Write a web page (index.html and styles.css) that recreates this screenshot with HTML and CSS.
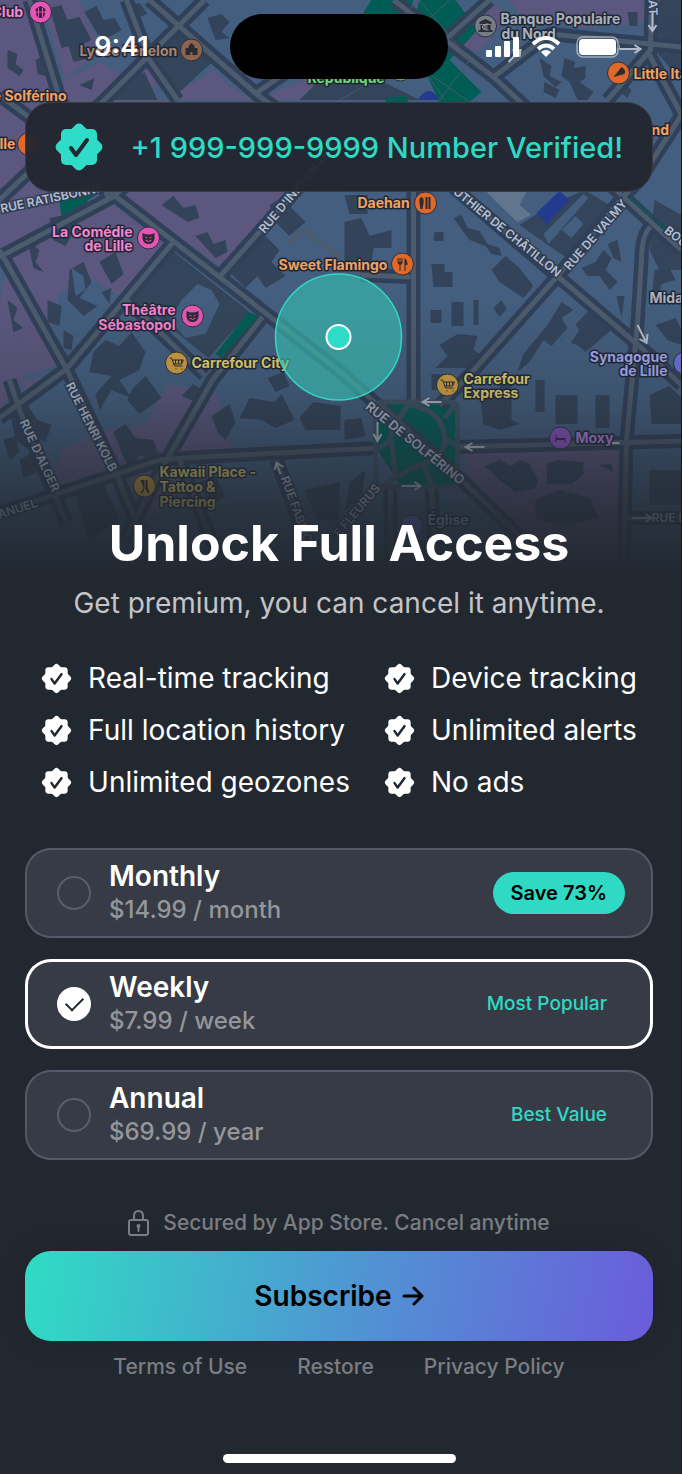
FILE: index.html
```html
<!DOCTYPE html>
<html lang="en">
<head>
    <meta charset="UTF-8">
    <meta name="viewport" content="width=device-width, initial-scale=1.0">
    <title>Unlock Full Access</title>
    <link rel="stylesheet" href="styles.css">
</head>
<body>
    <svg class="defs" width="0" height="0" aria-hidden="true">
        <symbol id="seal" viewBox="-25 -25 50 50">
            <rect x="-18" y="-18" width="36" height="36" rx="5"/>
            <rect x="-18" y="-18" width="36" height="36" rx="5" transform="rotate(45)"/>
            <path class="tick" d="M-8 1 L-3 8 L8 -7"/>
        </symbol>
    </svg>

    <main class="screen">
        <svg class="map" viewBox="0 0 682 600" preserveAspectRatio="xMidYMin slice" aria-hidden="true">
            <defs>
                <linearGradient id="fade" x1="0" y1="0" x2="0" y2="1">
                    <stop offset="0" stop-color="#222830" stop-opacity="0"/>
                    <stop offset="0.3" stop-color="#222830" stop-opacity="0.18"/>
                    <stop offset="0.5" stop-color="#222830" stop-opacity="0.48"/>
                    <stop offset="0.7" stop-color="#222830" stop-opacity="0.78"/>
                    <stop offset="0.92" stop-color="#222830"/>
                    <stop offset="1" stop-color="#222830"/>
                </linearGradient>
                <g id="streets">
                    <path d="M30 0L60 98L110 200M205 0L107 98L0 200M127 0L150 60L178 100M150 0L258 95L320 140M257 93L300 63L341 50M490 0L440 45M0 95L60 140L117 197L220 277L341 372L377 404L460 478L545 560"/>
                    <path d="M394 0L494 77L554 133L682 250M380 110L457 190L559 277L641 347L682 385M621 200L559 275L468 377L440 405M494 77L550 34L682 47M652 0L651 50L608 100M650 55L682 115L640 180L621 200"/>
                    <path d="M0 257L113 197L178 140M173 243L67 369L0 418M0 250L67 369L115 470L140 530M341 140L220 277M127 300L205 375M263 317L213 380L167 460L125 540M414 190V400M361 275L411 277M651 227Q642 235 642 260L638 323L627 440L624 570"/>
                    <path d="M0 513L160 460L200 457L378 448M458 447L682 441M10 380L20 410L67 523M277 460L310 550M180 460L220 560M391 487V580M432 487L436 560M624 518H682"/>
                </g>
            </defs>

            <rect width="682" height="600" fill="#435e7e"/>

            <!-- districts -->
            <g fill="#5b577e">
                <path d="M0 0H30L58 95L0 155ZM40 0H80L98 42L90 60L66 80ZM0 130L55 100L110 190L0 250ZM62 82L100 62L125 78L160 55L165 82L130 100L170 100L185 190H115L62 140ZM178 92L215 70L232 88L255 100H178ZM262 98L330 68L350 100H262ZM120 192H290L235 255L218 265ZM10 255L113 204L165 243L125 300L95 280L60 292L52 330L66 362L30 375L0 300Z"/>
                <path d="M0 300L30 370L0 410ZM20 380L60 375L30 400ZM168 385L215 388L232 448L170 455L50 490L62 450L105 430L145 425ZM467 452L622 448V580H540L465 470ZM510 0H682V15L640 22L580 28L520 14ZM448 30L490 0L510 15L480 52L455 45ZM128 470L170 462L190 480L150 520Z"/>
            </g>
            <g fill="#34455b">
                <path d="M172 250L250 312L209 358L132 296ZM180 18L215 60L180 92L155 55ZM115 88L145 72L158 100H112ZM340 60L420 100H300ZM660 0H682V80L655 50ZM60 200L85 196L90 206L75 215ZM345 180H440V190H345Z"/>
                <path d="M552 205L585 190L610 205L570 260L520 225ZM655 200L682 215V270L660 270L650 250ZM420 540H560V600H400ZM650 470H682V505H650Z"/>
            </g>
            <g fill="#005d55">
                <path d="M372 0H414L390 60L330 66ZM420 0H456L478 30L450 60L482 92L470 102H440L425 70L400 80ZM386 98L405 96L410 104H386ZM60 200L90 190H104L62 218ZM378 403H452Q458 404 458 410V480Q458 486 450 487H402L378 450Z"/>
            </g>
            <path d="M485 190H528L520 205L532 215L518 222L500 205Z" fill="#62758f"/>

            <!-- buildings -->
            <g fill="#33435a">
                <path d="M50 8L62 5L68 20L80 17L92 40L84 44L90 58L74 62L69 46L62 48ZM85 12L97 6L104 20L115 18L122 30L108 38L98 34ZM130 6L140 3L148 14L138 18ZM208 18L222 14L230 22L222 32L230 38L216 40ZM8 50L18 54L16 64L24 70L20 76L8 68ZM36 60L44 56L52 66L46 76L38 74ZM200 50L212 46L218 56L208 62ZM120 92L140 82L150 98H118ZM80 85L95 78L92 90Z"/>
                <path d="M540 58L552 66L550 76L562 82L556 87L544 76ZM565 58L576 62L574 68L586 66V78L580 82L594 92L588 100H578L570 82L562 76ZM545 82L560 90L556 98L544 92ZM628 12H638V26H630ZM622 80L632 90L628 98L618 90ZM665 18H682V38H668ZM610 150L640 160L630 175L608 166Z"/>
                <path d="M162 205L174 196L184 208L196 205L200 218L188 222ZM196 236L208 232L214 244L226 240L228 252L216 258ZM228 270L246 250L266 236L280 250L272 262L286 276L266 288L258 276L246 288ZM270 205L282 198L306 222L290 236L276 222ZM50 218L70 214L74 232L66 246L54 240ZM28 240L40 250L36 262L44 272L34 268ZM70 270L84 262L92 282L80 298L98 306L84 316L68 300ZM48 300L62 306L60 326L48 322ZM8 300L18 308L14 320L24 328L14 332ZM100 262L116 252L124 274L112 284ZM102 292L112 288L110 304ZM64 330L74 336L72 350L64 348Z"/>
                <path d="M345 195H368V214H350ZM345 222L362 218L370 236L392 230V248H374L372 262H345ZM435 232H444V241H434ZM432 264H445V272H453V287H434ZM452 302H464V326H452ZM474 300H479V325H474ZM431 310H442V323H431ZM494 308L502 300L507 309L500 317ZM454 218L462 215L468 228L480 231L488 244L500 248L502 256L492 254L486 246L470 240L464 232ZM492 270L506 256L520 268L534 286L524 298L512 290L500 282ZM440 345L458 334L478 336L474 350L484 356L470 368H436L448 356ZM432 374H446L440 390H432Z"/>
                <path d="M582 268L596 262L604 250L612 258L606 270L618 282L610 290L600 276L588 276ZM608 244L618 240L622 262L614 258ZM548 325L562 302L574 310L562 318L568 328L552 346L544 340L530 362L518 372L524 354ZM617 296H625L622 318ZM654 250L662 256L656 262ZM655 270L670 268L676 280L662 284L658 300H652ZM656 325L676 318L682 330V345L668 340ZM561 340L590 310L612 330L586 352L578 345Z"/>
                <path d="M94 352L106 340L120 346L132 332L146 352L140 370L120 380L132 398L112 390L100 410L96 394L112 376L90 372ZM132 390L146 376L162 398L140 414L128 400ZM10 410L28 405L38 420L52 425L46 442L32 434L30 450L16 440ZM4 440L16 436L20 452L10 460ZM114 432L126 424L136 438L154 440L160 458L140 456L130 470L122 452ZM182 396L194 384L206 392L196 402ZM212 416L230 404L236 422L226 440L218 432ZM250 398L275 402L282 394L295 420L276 428L262 420L240 418ZM300 418L314 402L341 406V430H306ZM345 420L362 418L366 436L345 440ZM268 378L284 372L290 386L276 392ZM75 492L104 484L120 520L90 540ZM20 460L34 452L38 472L24 478ZM200 482L216 476L226 496L210 506ZM305 490L340 482V520H318Z"/>
                <path d="M480 395H500V382H512V420L520 424L500 430L484 424ZM536 380H545V412H536ZM556 395H578V424H556ZM596 395H610V428H596ZM650 395L670 386L682 398V424H652ZM485 466L500 460L512 466L520 460L530 464L538 480L536 488L516 492L500 480ZM547 464L558 460L584 462V474L572 484H548ZM600 465L612 464L614 472ZM350 482L366 470L362 500L346 510ZM536 500L560 490L590 498L600 518L560 526L536 518Z"/>
            </g>
            <g fill="#435e7e">
                <path d="M182 300L198 284L212 290L220 304L206 334L186 338L170 320ZM72 268L84 276L86 290L76 296ZM562 340L574 322L580 330L568 348ZM544 234L584 194L589 198L549 244ZM562 230L576 216L584 224L572 238Z"/>
            </g>

            <!-- streets: dark kerb first, then the roadway -->
            <use href="#streets" class="kerb"/>
            <use href="#streets" class="roadway"/>
            <path d="M290 243L305 230L341 257" class="roadway"/>
            <path d="M249 312L259 316L221 358L216 354Z" fill="#005d55"/>
            <path d="M418 100Q430 82 440 100ZM537 213L560 191L570 200L547 224Z" fill="#223b8f"/>
            <path d="M631 198L682 244" fill="none" stroke="#0b5a58" stroke-width="2" stroke-dasharray="30 6"/>
            <path class="park-path" d="M376 410Q376 402 384 402H450Q458 402 458 410V478Q458 487 450 487H384Q376 487 376 478ZM412 405Q445 412 445 440Q446 455 425 463Q395 475 384 487M376 448Q392 446 392 430L410 403M392 440L396 478M445 418L458 402M447 440L458 446M424 463L433 487M380 402L458 480"/>
            <path d="M345 66L420 0M385 60L450 0M370 20L400 45M355 40L400 70M420 0L470 60L440 100M340 100L410 60L470 102M425 70L445 100" fill="none" stroke="#465a66" stroke-width="1"/>

            <!-- street names -->
            <g class="road-names">
                <text x="2" y="213" transform="rotate(-12 2 213)">RUE RATISBONNE</text>
                <text x="265" y="234" transform="rotate(-50 265 234)">RUE D'INKERMANN</text>
                <text x="453" y="193" transform="rotate(39 453 193)">UTHIER DE CHÂTILLON</text>
                <text x="570" y="271" transform="rotate(-49 570 271)">RUE DE VALMY</text>
                <text x="664" y="232" transform="rotate(38 664 232)">BOULEVARD</text>
                <text class="wide" x="365" y="408" transform="rotate(39 365 408)">RUE DE SOLFÉRINO</text>
                <text x="66" y="385" transform="rotate(63 66 385)">RUE HENRI KOLB</text>
                <text x="20" y="422" transform="rotate(65 20 422)">RUE D'ALGER</text>
                <text x="0" y="519" transform="rotate(-18 0 519)">ANUEL</text>
                <text x="281" y="478" transform="rotate(70 281 478)">RUE FABRICY</text>
                <text x="340" y="538" transform="rotate(-50 340 538)">E FLEURUS</text>
                <text x="652" y="522">RUE N</text>
                <text x="649" y="0" transform="rotate(88 649 0)">AT</text>
            </g>
            <g fill="none" stroke="#b4bac6" stroke-width="2">
                <path d="M653 12V30M649 25L653 31L657 25M620 49H640M635 45L641 49L635 53M509 62L520 51M513 50L521 50L520 57M638 325L646 341M640 339L647 343L648 334M442 402H424M430 398L423 402L430 406M378 422V439M374 434L378 441L382 434M485 447H467M473 443L466 447L473 451M402 486H420M415 482L421 486L415 490M281 474L277 464M275 470L277 463L284 467M633 518H651M646 514L652 518L646 522M612 443H620"/>
            </g>

            <!-- places -->
            <g class="places">
                <g class="pink">
                    <text x="-8" y="17">Club</text>
                    <text x="133" y="237" text-anchor="end">La Comédie</text>
                    <text x="133" y="251" text-anchor="end">de Lille</text>
                    <text x="176" y="315" text-anchor="end">Théâtre</text>
                    <text x="176" y="330" text-anchor="end">Sébastopol</text>
                </g>
                <g class="orange">
                    <text x="67" y="101" text-anchor="end">e Solférino</text>
                    <text x="0" y="149">lle</text>
                    <text x="358" y="208">Daehan</text>
                    <text x="279" y="270">Sweet Flamingo</text>
                    <text x="634" y="79">Little Italy</text>
                    <text x="652" y="135">nd</text>
                </g>
                <text class="brown" x="80" y="56">Lycée Fénelon</text>
                <text class="green" x="308" y="83">République</text>
                <g class="grey">
                    <text x="501" y="24">Banque Populaire</text>
                    <text x="502" y="39">du Nord</text>
                    <text x="650" y="303">Midas</text>
                </g>
                <g class="yellow">
                    <text x="192" y="368">Carrefour City</text>
                    <text x="464" y="384">Carrefour</text>
                    <text x="464" y="398">Express</text>
                    <text x="160" y="477">Kawaii Place -</text>
                    <text x="160" y="492">Tattoo &amp;</text>
                    <text x="160" y="507">Piercing</text>
                </g>
                <g class="violet">
                    <text x="668" y="362" text-anchor="end">Synagogue</text>
                    <text x="668" y="376" text-anchor="end">de Lille</text>
                    <text x="428" y="525">Église</text>
                </g>
                <text class="purple" x="576" y="443">Moxy</text>
            </g>

            <!-- pins -->
            <g class="pins">
                <circle cx="41" cy="12" r="11" fill="#e655b4"/>
                <circle cx="149" cy="238" r="11" fill="#e655b4"/>
                <circle cx="193" cy="316" r="11" fill="#e655b4"/>
                <circle cx="192" cy="50" r="11" fill="#8d6450"/>
                <circle cx="401" cy="70" r="11" fill="#45b04e"/>
                <circle cx="486" cy="26" r="11" fill="#747c86"/>
                <circle cx="619" cy="73" r="11" fill="#e0692a"/>
                <circle cx="29" cy="144" r="11" fill="#e0692a"/>
                <circle cx="426" cy="203" r="11" fill="#e0692a"/>
                <circle cx="403" cy="264" r="11" fill="#e0692a"/>
                <circle cx="177" cy="363" r="11" fill="#d1a040"/>
                <circle cx="448" cy="385" r="11" fill="#d1a040"/>
                <circle cx="145" cy="486" r="11" fill="#d19a30"/>
                <circle cx="561" cy="438" r="11" fill="#8d50c4"/>
                <circle cx="685" cy="363" r="11" fill="#6d70d8"/>
                <circle cx="412" cy="526" r="11" fill="#6d70d8"/>
            </g>
            <g fill="#2b2b33">
                <path id="mask" d="M143 233Q149 236 155 233V239Q154 244 149 244Q144 244 143 239Z"/>
                <use href="#mask" x="44" y="78"/>
                <path d="M186 55V48H189V46L192 43L195 46V48H198V55H193V52H191V55ZM480 22L486 19L492 22V24H480ZM481 25H491V30H493V32H479V30H481ZM614 77L622 67Q627 70 625 74ZM36 9L41 6L46 9L45 16Q41 20 37 16ZM556 435H557V438H566V442H565V440H557V442H556Z"/>
                <path d="M422 197Q425 198 424 203L423 209H421L420 203Q419 198 422 197ZM426 197H428V209H426ZM429 197H431V209H429ZM398 258H399V262H400V258H401V262H402V258H403V263L401 265V271H400V265L398 263ZM405 271V258Q408 260 408 265H406V271ZM141 480L144 488L141 493H143L145 489V480ZM148 480V486L150 493H148L146 489V480Z"/>
            </g>
            <g fill="none" stroke="#2b2b33" stroke-width="1">
                <path id="cart" d="M170 358H172L175 366H183M173 360H184L182 364H174M176 360V364M179 360V364M182 360V364M176 369H177M182 369H183"/>
                <use href="#cart" x="271" y="22"/>
                <path d="M484 26H488M484 28H488M489 24Q483 24 483 27Q483 30 489 30" stroke="#a0a6ae"/>
                <path d="M146 237L148 238M150 238L152 237M146 240Q149 243 152 240" stroke="#e655b4"/>
                <path d="M190 315L192 316M194 316L196 315M190 318Q193 321 196 318" stroke="#e655b4"/>
                <path d="M39 8V17M43 8V17M36 12H46" stroke="#e655b4"/>
            </g>

            <rect y="300" width="682" height="300" fill="url(#fade)"/>

            <!-- tracked device -->
            <circle cx="339" cy="337" r="63" fill="#37c3b4" fill-opacity="0.6" stroke="#2fd9c4" stroke-width="1.5"/>
            <circle cx="339" cy="337" r="12" fill="#2fdcc7" stroke="#fff" stroke-width="2"/>
        </svg>

        <header class="status-bar">
            <span class="time">9:41</span>
            <span class="island"></span>
            <svg class="status-icons" width="134" height="24" viewBox="0 0 134 24" fill="#fff" aria-hidden="true">
                <rect x="0" y="15" width="6" height="7" rx="1"/>
                <rect x="9" y="11" width="6" height="11" rx="1"/>
                <rect x="18" y="6" width="6" height="16" rx="1"/>
                <rect x="27" y="2" width="6" height="20" rx="1"/>
                <g fill="none" stroke="#fff" stroke-width="4">
                    <path d="M47 9Q60 -3 73 9"/>
                    <path d="M52 14Q60 7 68 14"/>
                </g>
                <path d="M55 17Q60 13 65 17L60 22Z"/>
                <rect x="91" y="2" width="41" height="20" rx="6" fill="none" stroke="#fff" stroke-opacity="0.5" stroke-width="1.5"/>
                <rect x="93" y="4" width="37" height="16" rx="4"/>
                <path d="M133 9Q135 12 133 15Z" fill-opacity="0.5"/>
            </svg>
        </header>

        <div class="verified">
            <svg class="verified-icon"><use href="#seal"/></svg>
            <span>+1 999-999-9999 Number Verified!</span>
        </div>

        <section class="intro">
            <h1>Unlock Full Access</h1>
            <p>Get premium, you can cancel it anytime.</p>
        </section>

        <ul class="features">
            <li><svg><use href="#seal"/></svg>Real-time tracking</li>
            <li><svg><use href="#seal"/></svg>Device tracking</li>
            <li><svg><use href="#seal"/></svg>Full location history</li>
            <li><svg><use href="#seal"/></svg>Unlimited alerts</li>
            <li><svg><use href="#seal"/></svg>Unlimited geozones</li>
            <li><svg><use href="#seal"/></svg>No ads</li>
        </ul>

        <form class="checkout">
            <div class="plans">
                <label class="plan">
                    <input type="radio" name="plan" value="monthly">
                    <span class="plan-text">
                        <span class="plan-name">Monthly</span>
                        <span class="plan-price">$14.99 / month</span>
                    </span>
                    <span class="tag tag-save">Save 73%</span>
                </label>
                <label class="plan">
                    <input type="radio" name="plan" value="weekly" checked>
                    <span class="plan-text">
                        <span class="plan-name">Weekly</span>
                        <span class="plan-price">$7.99 / week</span>
                    </span>
                    <span class="tag">Most Popular</span>
                </label>
                <label class="plan">
                    <input type="radio" name="plan" value="annual">
                    <span class="plan-text">
                        <span class="plan-name">Annual</span>
                        <span class="plan-price">$69.99 / year</span>
                    </span>
                    <span class="tag">Best Value</span>
                </label>
            </div>

            <p class="secured">
                <svg width="22" height="26" viewBox="0 0 22 26" fill="none" stroke="#7b7d82" stroke-width="2" aria-hidden="true">
                    <rect x="1" y="10" width="19" height="15" rx="2"/>
                    <path d="M6 10V6Q6 1 10.500 1Q15 1 15 6V10"/>
                    <path d="M10.500 16V21" stroke-linecap="round"/>
                    <circle cx="10.500" cy="16" r="1"/>
                </svg>
                Secured by App Store. Cancel anytime
            </p>

            <button type="submit" class="subscribe">
                Subscribe
                <svg width="22" height="20" viewBox="0 0 22 20" fill="none" stroke="#000" stroke-width="3" stroke-linecap="round" stroke-linejoin="round" aria-hidden="true">
                    <path d="M2 10H20M12 2L20 10L12 18"/>
                </svg>
            </button>
        </form>

        <nav class="links">
            <a href="#">Terms of Use</a>
            <a href="#">Restore</a>
            <a href="#">Privacy Policy</a>
        </nav>

        <div class="home-bar"></div>
    </main>
</body>
</html>
```
FILE: styles.css
```css
* {
    box-sizing: border-box;
}
body {
    margin: 0;
    background-color: #16161c;
    font-family: Inter, "Liberation Sans", sans-serif;
    color: #fff;
}
.defs {
    position: absolute;
}
.screen {
    position: relative;
    display: flex;
    flex-direction: column;
    min-height: 100vh;
    margin-right: 1px;
    padding: 14px 28px 11px 25px;
    background-color: #222830;
    overflow: hidden;
}

/* Map */
.map {
    position: absolute;
    top: 0;
    left: 0;
    width: 100%;
    height: 600px;
}
.screen > :not(.map) {
    position: relative;
}
.kerb {
    fill: none;
    stroke: #304058;
    stroke-width: 14px;
    stroke-linejoin: round;
}
.roadway {
    fill: none;
    stroke: #4c5b6d;
    stroke-width: 5px;
    stroke-linejoin: round;
}
.park-path {
    fill: none;
    stroke: #3f5164;
    stroke-width: 5px;
}
.road-names {
    font-size: 12px;
    font-weight: 600;
    fill: #b4bfd2;
    stroke: #2f3d52;
    stroke-width: 3px;
    paint-order: stroke;
}
.road-names .wide {
    font-size: 13px;
}
.places {
    font-size: 14px;
    font-weight: 700;
    stroke: #1f2735;
    stroke-width: 3px;
    stroke-linejoin: round;
    paint-order: stroke;
}
.pink { fill: #f585d0; }
.orange { fill: #f3a162; }
.brown { fill: #a98272; }
.green { fill: #6fd777; }
.grey { fill: #a9b0b9; }
.yellow { fill: #e6d26c; }
.violet { fill: #a5a9f0; }
.purple { fill: #b183e0; }
.pins circle {
    stroke: #26303f;
    stroke-width: 1px;
}

/* Status bar */
.status-bar {
    display: grid;
    grid-template-columns: 1fr 218px 1fr;
    align-items: center;
    justify-items: center;
    height: 65px;
}
.time {
    padding-right: 12px;
    font-size: 27px;
    font-weight: 600;
}
.island {
    width: 218px;
    height: 65px;
    border-radius: 33px;
    background-color: #000;
}
.status-icons {
    margin-left: 4px;
}

/* Verified banner */
.verified {
    display: flex;
    align-items: center;
    justify-content: space-between;
    height: 90px;
    margin-top: 23px;
    padding: 0 29px 0 28px;
    border: 1px solid #3a3c42;
    border-radius: 26px;
    background-color: rgba(34, 39, 48, 0.96);
    color: #2fd9c4;
    font-size: 29px;
    font-weight: 500;
    white-space: nowrap;
}
.verified-icon {
    width: 50px;
    height: 50px;
    fill: #2fdcc7;
}
.tick {
    fill: none;
    stroke: #222830;
    stroke-width: 4px;
    stroke-linecap: round;
    stroke-linejoin: round;
}

/* Title */
.intro {
    margin-top: 321px;
    text-align: center;
}
.intro h1 {
    margin: 0;
    font-size: 50px;
    font-weight: 700;
    line-height: 60px;
}
.intro p {
    margin: 12px 0 0;
    color: #c4c5c8;
    font-size: 28px;
    line-height: 36px;
}

/* Features */
.features {
    display: grid;
    grid-template-columns: auto auto;
    justify-content: center;
    gap: 20px 34px;
    margin: 41px 0 0;
    padding: 0;
    list-style: none;
    font-size: 28px;
    line-height: 32px;
    white-space: nowrap;
}
.features li {
    display: flex;
    align-items: center;
    gap: 16px;
}
.features svg {
    width: 31px;
    height: 31px;
    fill: #fff;
}

/* Plans */
.plans {
    display: flex;
    flex-direction: column;
    gap: 21px;
    margin-top: 50px;
}
.plan {
    display: flex;
    align-items: center;
    gap: 18px;
    height: 90px;
    padding: 0 28px 0 32px;
    border-radius: 26px;
    background-color: #363b45;
    box-shadow: inset 0 0 0 2px #555a68;
}
.plan:has(input:checked) {
    box-shadow: inset 0 0 0 3px #fff;
}
.plan input {
    appearance: none;
    display: grid;
    place-items: center;
    width: 34px;
    height: 34px;
    margin: 0;
    border: 2px solid #5a5e6c;
    border-radius: 50%;
}
.plan input:checked {
    border-color: #fff;
    background-color: #fff;
}
.plan input:checked::after {
    content: "";
    width: 15px;
    height: 8px;
    margin-bottom: 4px;
    border-left: 2px solid #222830;
    border-bottom: 2px solid #222830;
    transform: rotate(-45deg);
}
.plan-text {
    display: flex;
    flex: 1;
    flex-direction: column;
    line-height: 34px;
}
.plan-name {
    font-size: 28px;
    font-weight: 600;
}
.plan-price {
    color: #94969c;
    font-size: 24px;
    font-weight: 500;
}
.tag {
    padding: 0 18px;
    border-radius: 21px;
    color: #2fd9c4;
    font-size: 19px;
    font-weight: 500;
    line-height: 42px;
}
.tag-save {
    background-color: #2fd9c4;
    color: #000;
    font-size: 20px;
    font-weight: 600;
}

/* Checkout */
.secured {
    display: flex;
    align-items: center;
    justify-content: center;
    gap: 13px;
    margin: 48px 0 13px;
    color: #7b7d82;
    font-size: 21px;
    font-weight: 500;
    line-height: 30px;
}
.subscribe {
    display: flex;
    align-items: center;
    justify-content: center;
    gap: 10px;
    width: 100%;
    height: 90px;
    border: none;
    border-radius: 26px;
    background: linear-gradient(100deg, #2fdcc4, #4e98d2 50%, #6b5cdb);
    box-shadow: 0 0 20px rgba(34, 30, 40, 0.6);
    color: #000;
    font-family: inherit;
    font-size: 28px;
    font-weight: 600;
}
.links {
    display: flex;
    justify-content: center;
    gap: 50px;
    margin-top: 11px;
    font-size: 21px;
    font-weight: 500;
    line-height: 30px;
}
.links a {
    color: #7b7d82;
    text-decoration: none;
}
.home-bar {
    align-self: center;
    width: 233px;
    height: 9px;
    margin-top: auto;
    border-radius: 5px;
    background-color: #fff;
}
```
